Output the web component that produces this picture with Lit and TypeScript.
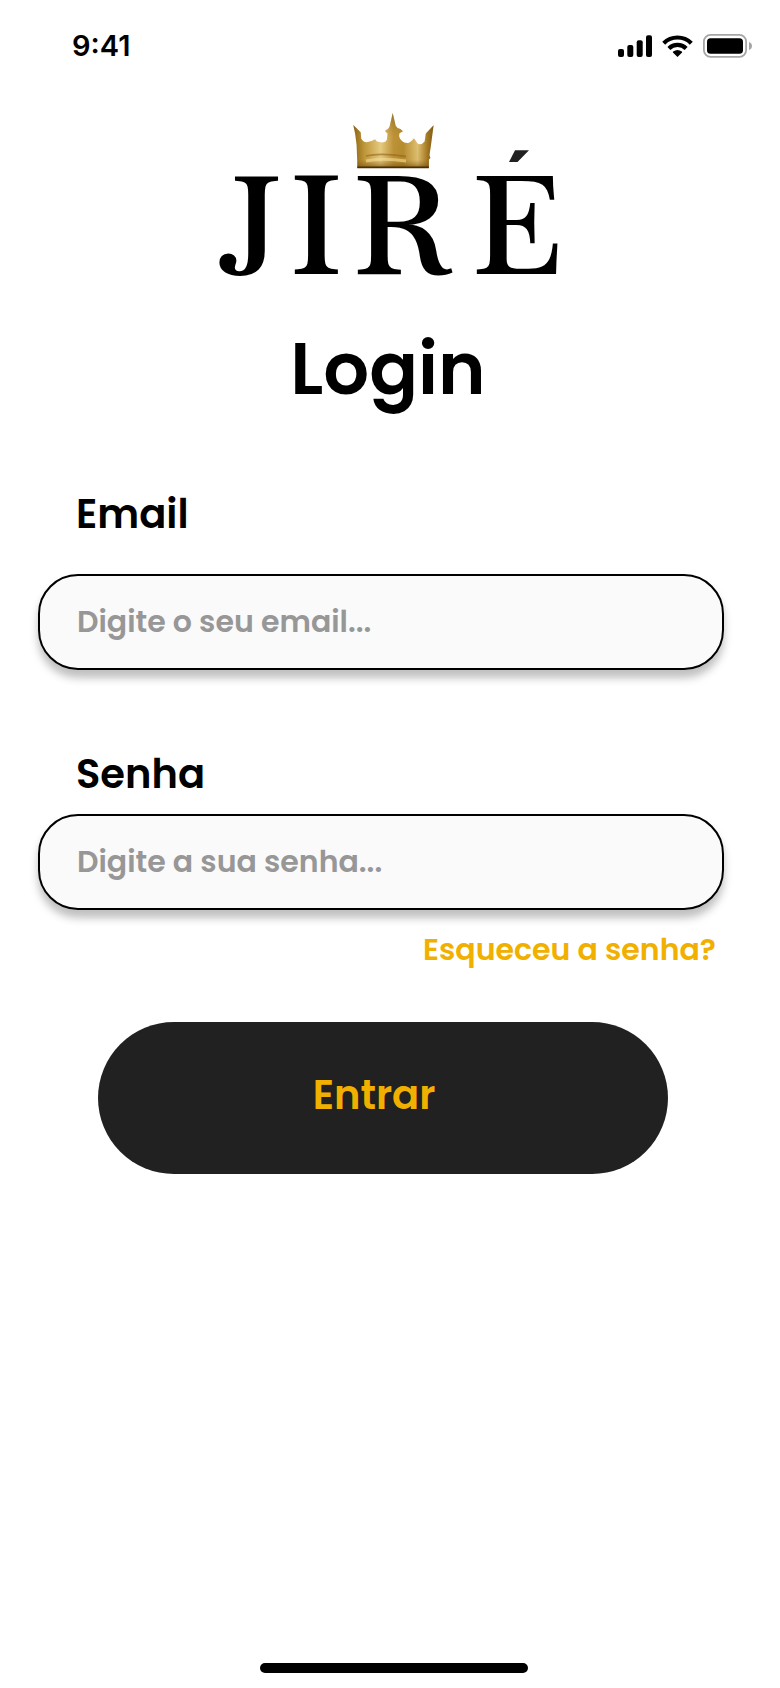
import { LitElement, html, css } from "lit";
import { customElement } from "lit/decorators.js";

@customElement("status-bar")
class StatusBar extends LitElement {
  static styles = css`
    :host {
      display: flex;
      align-items: center;
      justify-content: space-between;
      height: 91px;
      padding: 0 28px 0 72px;
      font: 600 29px/36px Inter, sans-serif;
      color: #000;
    }
    .icons {
      display: flex;
      align-items: center;
      gap: 10px;
    }
    svg {
      display: block;
    }
  `;

  render() {
    return html`
      <span>9:41</span>
      <div class="icons">
        <svg width="34" height="22" viewBox="0 0 34 22" aria-hidden="true">
          <rect x="0" y="14" width="6" height="8" rx="2" />
          <rect x="9.3" y="10" width="6" height="12" rx="2" />
          <rect x="18.7" y="5.3" width="6" height="16.7" rx="2" />
          <rect x="28" y="0.3" width="6" height="21.7" rx="2" />
        </svg>
        <svg width="31" height="22" viewBox="0 0 31 22" aria-hidden="true">
          <g fill="none" stroke="#000" stroke-width="4.2">
            <path d="M1.7 8.2 A19.6 19.6 0 0 1 29.3 8.2" />
            <path d="M6.9 13.5 A12.2 12.2 0 0 1 24.1 13.5" />
          </g>
          <path d="M15.5 22 L10.9 17.4 Q10.7 16.9 11.2 16.6 Q15.5 13.6 19.8 16.6 Q20.3 16.9 20.1 17.4 Z" />
        </svg>
        <svg width="49" height="24" viewBox="0 0 49 24" aria-hidden="true">
          <rect x="0.9" y="0.9" width="42.2" height="22" rx="6.6" fill="none" stroke="#a6a6a6" stroke-width="1.8" />
          <rect x="4" y="4.2" width="36" height="15.6" rx="3.6" />
          <path d="M46 8 Q49 9.2 49 12 Q49 14.8 46 16 Z" fill="#a6a6a6" />
        </svg>
      </div>
    `;
  }
}

@customElement("brand-logo")
class BrandLogo extends LitElement {
  static styles = css`
    :host {
      display: flex;
      justify-content: center;
    }
    svg {
      display: block;
      width: 380px;
      height: 216px;
      overflow: visible;
    }
    .word {
      font: 600 138px Baskervville, "Liberation Serif", serif;
    }
  `;

  render() {
    return html`
      <svg viewBox="0 0 380 216" role="img" aria-label="JIRÉ">
        <defs>
          <linearGradient id="gold" x1="0" y1="0" x2="1" y2="0">
            <stop offset="0" stop-color="#8a6416" />
            <stop offset="0.14" stop-color="#c39a3c" />
            <stop offset="0.34" stop-color="#ecd28a" />
            <stop offset="0.5" stop-color="#c0953a" />
            <stop offset="0.62" stop-color="#b88d30" />
            <stop offset="0.8" stop-color="#e4c678" />
            <stop offset="0.92" stop-color="#a67a24" />
            <stop offset="1" stop-color="#7c5510" />
          </linearGradient>
          <linearGradient id="shade" x1="0" y1="0" x2="0" y2="1">
            <stop offset="0" stop-color="#5c4310" stop-opacity="0.45" />
            <stop offset="0.45" stop-color="#a87e24" stop-opacity="0.08" />
            <stop offset="0.85" stop-color="#8f6412" stop-opacity="0.1" />
            <stop offset="1" stop-color="#6b4508" stop-opacity="0.7" />
          </linearGradient>
          <path
            id="crown"
            d="M153.3 25 L160.7 32.3 L161.2 38.5 Q163 42 166.7 42.3 Q171 42 175 39.3 L177 41.5 L181 42.3 Q185.5 43 186.8 40
               L187.6 33.4 Q185 32 185.2 30.4 Q188.6 29.6 189.6 26.5 L192.7 13 L195.7 25.7 Q197 28.4 200.4 29 L203 31.2
               L199.5 33.2 Q198.4 36 200 38.8 Q203 43.4 208.3 43 L211 41.4 L214 38.3 L217.6 43.4 Q221 45.6 224.6 41.4
               L225.8 33.5 L233.6 25.3 L231 45 L229.5 55 L230.4 58 L229 59.5 L228.8 68 H157.4 L157.2 60 L156.6 45 L155.2 34 Z"
          />
        </defs>
        <use href="#crown" fill="url(#gold)" />
        <use href="#crown" fill="url(#shade)" />
        <path d="M166 56 Q180 52.5 206 56.5" fill="none" stroke="#8f6618" stroke-width="1.8" opacity="0.6" />
        <path d="M166 61 Q182 57.5 206 61" fill="none" stroke="#f5dd96" stroke-width="3" opacity="0.6" />
        <path d="M157.4 67.4 H228.8" stroke="#4a2f06" stroke-width="1.6" />
        <text class="word" y="174" x="18 90 153 272">JIRE</text>
        <path d="M315 50.3 H329 L317.5 62 H309 Z" fill="#212121" />
      </svg>
    `;
  }
}

@customElement("app-root")
class AppRoot extends LitElement {
  static styles = css`
    :host {
      display: flex;
      flex-direction: column;
      min-height: 100vh;
      box-sizing: border-box;
      padding-bottom: 15px;
      background: #fff;
      color: #000;
      font-family: Poppins, Inter, sans-serif;
      font-weight: 600;
    }
    brand-logo {
      margin-top: 9px;
    }
    h1 {
      margin: 11px 0 0;
      padding-right: 4px;
      font-size: 72px;
      line-height: 84px;
      font-weight: 600;
      text-align: center;
    }
    form {
      display: flex;
      flex-direction: column;
      padding: 0 56px 0 38px;
    }
    .field {
      display: flex;
      flex-direction: column;
      gap: 17px;
      margin-top: 81px;
    }
    .field.roomy {
      gap: 37px;
      margin-top: 80px;
    }
    label {
      padding-left: 38px;
      font-size: 40px;
      line-height: 46px;
    }
    input {
      box-sizing: border-box;
      width: 100%;
      height: 96px;
      padding: 0 37px;
      border: 2px solid #000;
      border-radius: 40px;
      background: #fafafa;
      box-shadow: 0 8px 8px rgba(0, 0, 0, 0.25);
      color: #000;
      font: inherit;
      font-size: 30px;
      outline: none;
    }
    input::placeholder {
      color: #979797;
      opacity: 1;
    }
    .forgot {
      align-self: flex-end;
      margin: 22px 8px 0 0;
      font-size: 30px;
      line-height: 36px;
      color: #f1b000;
      text-decoration: none;
    }
    button {
      height: 152px;
      margin: 54px 56px 0 60px;
      padding: 0 18px 6px 0;
      border: 0;
      border-radius: 76px;
      background: #212121;
      color: #f1b000;
      font: inherit;
      font-size: 40px;
      line-height: 46px;
      cursor: pointer;
    }
    .bottom {
      display: flex;
      justify-content: center;
      margin-top: auto;
      padding: 40px 0 0 8px;
    }
    .home {
      width: 268px;
      height: 10px;
      border-radius: 5px;
      background: #000;
    }
  `;

  render() {
    return html`
      <status-bar></status-bar>
      <brand-logo></brand-logo>
      <h1>Login</h1>
      <form @submit=${(e: Event) => e.preventDefault()}>
        <div class="field roomy">
          <label for="email">Email</label>
          <input id="email" type="email" placeholder="Digite o seu email..." />
        </div>
        <div class="field">
          <label for="senha">Senha</label>
          <input id="senha" type="password" placeholder="Digite a sua senha..." />
        </div>
        <a class="forgot" href="#">Esqueceu a senha?</a>
        <button type="submit">Entrar</button>
      </form>
      <div class="bottom"><div class="home"></div></div>
    `;
  }
}
